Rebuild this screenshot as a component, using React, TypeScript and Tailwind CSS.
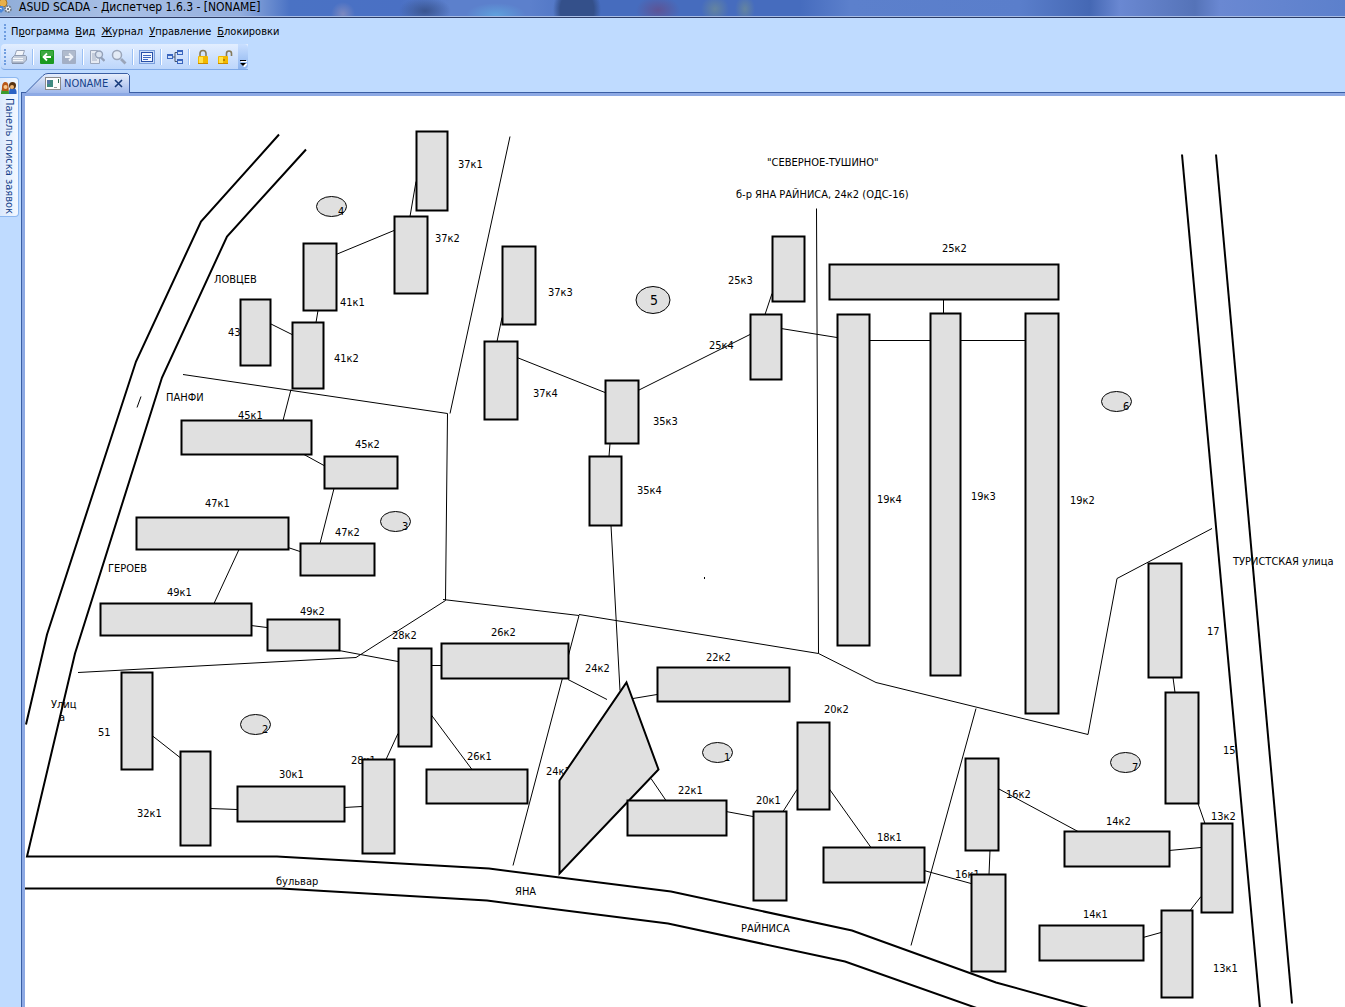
import React from 'react'

type Rect = [number, number, number, number]
type Line = [number, number, number, number]
type Label = [string, number, number]

// left, top, right, bottom
const buildings: Rect[] = [
  [416, 131, 447, 210],
  [394, 216, 427, 293],
  [303, 243, 336, 310],
  [240, 299, 270, 365],
  [292, 322, 323, 388],
  [181, 420, 311, 454],
  [324, 456, 397, 488],
  [136, 517, 288, 549],
  [300, 543, 374, 575],
  [100, 603, 251, 635],
  [267, 619, 339, 650],
  [121, 672, 152, 769],
  [180, 751, 210, 845],
  [237, 786, 344, 821],
  [362, 759, 394, 853],
  [398, 648, 431, 746],
  [441, 643, 568, 678],
  [426, 769, 527, 803],
  [657, 667, 789, 701],
  [627, 800, 726, 835],
  [753, 811, 786, 900],
  [797, 722, 829, 809],
  [823, 847, 924, 882],
  [502, 246, 535, 324],
  [484, 341, 517, 419],
  [605, 380, 638, 443],
  [589, 456, 621, 525],
  [772, 236, 804, 301],
  [750, 314, 781, 379],
  [829, 264, 1058, 299],
  [837, 314, 869, 645],
  [930, 313, 960, 675],
  [1025, 313, 1058, 713],
  [1148, 563, 1181, 677],
  [1165, 692, 1198, 803],
  [1201, 823, 1232, 912],
  [1161, 910, 1192, 997],
  [1064, 831, 1169, 866],
  [1039, 925, 1143, 960],
  [965, 758, 998, 850],
  [971, 874, 1005, 971],
]

const links: Line[] = [
  [416, 181, 410, 216],
  [394, 230, 336, 254],
  [318, 310, 316, 322],
  [270, 323, 292, 334],
  [291, 389, 283, 420],
  [304, 454, 324, 465],
  [334, 488, 320, 543],
  [288, 547, 300, 551],
  [239, 549, 214, 603],
  [251, 625, 267, 627],
  [339, 650, 398, 661],
  [431, 665, 441, 665],
  [152, 735, 180, 757],
  [210, 808, 237, 809],
  [344, 807, 362, 806],
  [386, 759, 398, 733],
  [431, 714, 472, 769],
  [568, 679, 607, 699],
  [633, 698, 657, 694],
  [611, 525, 620, 690],
  [502, 317, 497, 341],
  [517, 357, 605, 392],
  [638, 390, 750, 334],
  [610, 443, 609, 456],
  [772, 293, 765, 314],
  [781, 328, 837, 337],
  [869, 340, 1025, 340],
  [943.5, 299, 943.5, 313],
  [651, 778, 666, 800],
  [726, 811, 753, 816],
  [783, 811, 797, 789],
  [829, 788, 871, 847],
  [924, 870, 971, 883],
  [990, 850, 989, 874],
  [998, 788, 1078, 831],
  [1169, 850, 1201, 847],
  [1173, 677, 1175, 692],
  [1198, 803, 1205, 823],
  [1201, 896, 1190, 910],
  [1143, 937, 1161, 932],
]

const borders = [
  '510,136 450,413',
  '183,374 447.5,413 445.5,600 356,657 78,672',
  '443,599 579,615',
  '579,614 818.5,653 876,682 1088,734 1117,578 1212,528',
  '816.5,208 818.500,653',
  '579,615 513,865',
  '976,708 911,945',
  '141,396 137,407',
]

const roads = [
  '279,134 201,221 136,361 47,634 26,724',
  '306,149 227,236 162,377 75,653 27,856 277,856 489,868 671,891 852,930 996,982 1090,1008',
  '25,888 281,888 487,900 668,923 845,961 978,1008',
  '1182,154 1260,1008',
  '1216,154 1292,1003',
]

const houseLabels: Label[] = [
  ['37к1', 457, 168],
  ['37к2', 434, 242],
  ['41к1', 339, 306],
  ['43', 227, 336],
  ['41к2', 333, 362],
  ['45к1', 237, 419],
  ['45к2', 354, 448],
  ['47к1', 204, 507],
  ['47к2', 334, 536],
  ['49к1', 166, 596],
  ['49к2', 299, 615],
  ['28к2', 391, 639],
  ['26к2', 490, 636],
  ['26к1', 466, 760],
  ['24к2', 584, 672],
  ['24к1', 545, 775],
  ['22к2', 705, 661],
  ['22к1', 677, 794],
  ['20к1', 755, 804],
  ['20к2', 823, 713],
  ['18к1', 876, 841],
  ['51', 97, 736],
  ['32к1', 136, 817],
  ['30к1', 278, 778],
  ['28к1', 350, 764],
  ['37к3', 547, 296],
  ['37к4', 532, 397],
  ['35к3', 652, 425],
  ['35к4', 636, 494],
  ['25к3', 727, 284],
  ['25к4', 708, 349],
  ['25к2', 941, 252],
  ['19к4', 876, 503],
  ['19к3', 970, 500],
  ['19к2', 1069, 504],
  ['17', 1206, 635],
  ['15', 1222, 754],
  ['13к2', 1210, 820],
  ['13к1', 1212, 972],
  ['14к2', 1105, 825],
  ['14к1', 1082, 918],
  ['16к2', 1005, 798],
  ['16к1', 954, 878],
]

const streetLabels: Label[] = [
  ['ЛОВЦЕВ', 213, 283],
  ['ПАНФИ', 165, 401],
  ['ГЕРОЕВ', 107, 572],
  ['Улиц', 50, 708],
  ['а', 58, 721],
  ['бульвар', 275, 885],
  ['ЯНА', 514, 895],
  ['РАЙНИСА', 740, 932],
  ['ТУРИСТСКАЯ  улица', 1232, 565],
  ['"СЕВЕРНОЕ-ТУШИНО"', 766, 166],
  ['б-р ЯНА РАЙНИСА, 24к2 (ОДС-16)', 735, 198],
]

const sectors: Label[] = [
  ['4', 331, 206],
  ['3', 395, 521],
  ['2', 255, 724],
  ['1', 717, 752],
  ['6', 1116, 401],
  ['7', 1125, 762],
]

const menu = [
  ['П', 'р', 'ограмма'],
  ['', 'В', 'ид'],
  ['', 'Ж', 'урнал'],
  ['', 'У', 'правление'],
  ['', 'Б', 'локировки'],
]

const DistrictMap: React.FC = () => (
  <svg className="block h-full w-full" role="img" aria-label="Северное-Тушино">
    <g transform="translate(-24 -96)" className="text-[11px] whitespace-pre">
      {[...houseLabels, ...streetLabels].map(([text, x, y]) => (
        <text key={text} x={x} y={y}>
          {text}
        </text>
      ))}
    </g>
    <g transform="translate(-25 -95.5)" fill="none" stroke="#000">
      {links.map(([x1, y1, x2, y2]) => (
        <line key={`${x1}-${y1}`} x1={x1} y1={y1} x2={x2} y2={y2} />
      ))}
      {borders.map((points) => (
        <polyline key={points} points={points} />
      ))}
      <rect x="704" y="576.5" width="1" height="2" fill="#000" stroke="none" />
      {roads.map((points) => (
        <polyline key={points} points={points} strokeWidth="2" />
      ))}
    </g>
    <g transform="translate(-24.5 -95.5)" fill="#e0e0e0" stroke="#000">
      <polygon points="626,682 658,769 559,873 559,780" strokeWidth="2" />
      {buildings.map(([l, t, r, b]) => (
        <rect key={`${l}-${t}`} x={l} y={t} width={r - l} height={b - t} strokeWidth="2" />
      ))}
      {sectors.map(([n, x, y]) => (
        <ellipse key={n} cx={x} cy={y} rx="15" ry="10" />
      ))}
      <ellipse cx="652.5" cy="299.5" rx="17" ry="13.500" />
    </g>
    <g transform="translate(-24 -96)" className="text-[11px]">
      {sectors.map(([n, x, y]) => (
        <text key={n} x={x + 6} y={y + 9}>
          {n}
        </text>
      ))}
      <text x="653" y="305" textAnchor="middle" className="text-sm">
        5
      </text>
    </g>
  </svg>
)

const AppIcon = () => (
  <svg width="16" height="16" viewBox="0 0 16 16" className="-ml-1 shrink-0">
    <circle cx="7" cy="3" r="4" fill="#e8b04a" stroke="#a87420" />
    <path d="M2 6l5 0 1 4-3 3-3-3z" fill="#4a86d8" />
    <path d="M3 8l3 1" stroke="#dce8fa" />
    <circle cx="12" cy="9" r="3" fill="#eceff3" stroke="#6c7784" strokeWidth="1.6" strokeDasharray="2 1" />
    <circle cx="12" cy="9" r="1" fill="#4c5866" />
  </svg>
)

const PrinterIcon = () => (
  <svg width="16" height="16" viewBox="0 0 16 16">
    <path d="M5.500 1.500h8l-2 6h-8z" fill="#f3f5f9" stroke="#98a3b8" />
    <path d="M1 9l2.500-2.500h11l1 1v3.500l-3 3H1z" fill="#c3ccda" stroke="#8f9bb1" />
    <path d="M2 9.500h10M2 11.500h10" stroke="#f5f7fa" />
    <path d="M1 14.500h11.500" stroke="#8390a8" />
  </svg>
)

const ArrowIcon = ({ active }: { active?: boolean }) => (
  <svg width="16" height="16" viewBox="0 0 16 16">
    <rect x="1" y="1" width="14" height="14" rx="1" fill={active ? '#1c9a22' : '#a3afc5'} />
    <path d="M2 2h12v5H2z" fill="#fff" opacity="0.15" />
    {active ? (
      <path d="M12 8H4.500M8 4.500L4.500 8 8 11.500" fill="none" stroke="#fff" strokeWidth="1.800" />
    ) : (
      <path d="M4 8h7.500M8 4.500l3.500 3.500L8 11.500" fill="none" stroke="#eef2f8" strokeWidth="1.800" />
    )}
  </svg>
)

const PreviewIcon = () => (
  <svg width="16" height="16" viewBox="0 0 16 16">
    <path d="M1.500 1.500h7l2 2v11h-9z" fill="#e6ebf3" stroke="#9ba7bd" />
    <path d="M3 5h3M3 7h3M3 9h4M3 11h5" stroke="#a5b0c4" />
    <circle cx="10" cy="5.500" r="3.500" fill="#dbe4f1" stroke="#94a1b8" strokeWidth="1.400" />
    <path d="M12 8.500l3.500 3.500" stroke="#94a1b8" strokeWidth="2.400" />
  </svg>
)

const MagnifierIcon = () => (
  <svg width="16" height="16" viewBox="0 0 16 16">
    <circle cx="6" cy="6" r="4.500" fill="#e3ebf6" stroke="#9aa5b9" strokeWidth="1.500" />
    <path d="M10 10l4.500 4.500" stroke="#9aa5b9" strokeWidth="2.800" />
  </svg>
)

const ListIcon = () => (
  <svg width="16" height="16" viewBox="0 0 16 16">
    <rect x="0.500" y="1.500" width="15" height="13" fill="#c9dcf9" stroke="#7b9fdd" />
    <rect x="2.500" y="3.500" width="11" height="9" fill="#f4f8ff" stroke="#2950a8" />
    <path d="M4 6.500h8M4 8.500h8M4 10.500h5" stroke="#3d68c0" />
  </svg>
)

const NetworkIcon = () => (
  <svg width="16" height="16" viewBox="0 0 16 16">
    <path d="M5 8h3M8 3.500v9M8 3.500h3M8 12.500h3" fill="none" stroke="#46546c" />
    <rect x="0.500" y="5.500" width="5" height="4" fill="#cfe0fb" stroke="#3a66be" />
    <rect x="10.500" y="1.500" width="5" height="4" fill="#cfe0fb" stroke="#3a66be" />
    <rect x="10.500" y="10.500" width="5" height="4" fill="#cfe0fb" stroke="#3a66be" />
    <path d="M0 6h6M10 2h6M10 11h6" stroke="#3a66be" strokeWidth="2" />
  </svg>
)

const LockIcon = () => (
  <svg width="16" height="16" viewBox="0 0 16 16">
    <path d="M5 8V4.500a3 3 0 016 0V8" fill="none" stroke="#857a5a" strokeWidth="1.600" />
    <rect x="3" y="7" width="10" height="8" rx="1" fill="#f2b800" />
    <path d="M4 8h4v6H4z" fill="#ffe34d" />
    <path d="M3 14.500h10" stroke="#c98a00" />
  </svg>
)

const UnlockIcon = () => (
  <svg width="16" height="16" viewBox="0 0 16 16">
    <path d="M9.500 8V4.500a2.500 2.500 0 015 0V7" fill="none" stroke="#857a5a" strokeWidth="1.600" />
    <rect x="1" y="7" width="10" height="8" rx="1" fill="#f2b800" />
    <path d="M2 8h4v6H2z" fill="#ffe34d" />
    <path d="M1 14.500h10" stroke="#c98a00" />
    <circle cx="7" cy="11" r="1" fill="#a87400" />
  </svg>
)

const PeopleIcon = () => (
  <svg width="16" height="16" viewBox="0 0 16 16" className="shrink-0">
    <path d="M8 14c0-5 1-6 3.500-6S16 9 15.500 14z" fill="#2b62c4" />
    <circle cx="11.500" cy="5.500" r="3.500" fill="#5b3410" />
    <circle cx="11" cy="7" r="2" fill="#f0b878" />
    <path d="M0 14c0-4 1-6 4-6s4 2 4 6z" fill="#3c9a2e" />
    <path d="M1 11c-.5-7 1-9 3.500-9S8 5 7.500 11z" fill="#b8581a" />
    <circle cx="4.500" cy="7" r="2" fill="#f6c890" />
  </svg>
)

const TabIcon = () => (
  <svg width="16" height="14" viewBox="0 0 16 14">
    <rect x="0.500" y="0.500" width="15" height="12" fill="#fdfdfd" stroke="#8b8b8b" />
    <rect x="2" y="3" width="6" height="7" fill="#3f8a80" />
    <rect x="2" y="3" width="3" height="4" fill="#5578a8" />
    <path d="M13.500 2v4" stroke="#2f6f55" />
    <path d="M9 10.500h3" stroke="#999" />
  </svg>
)

const Grip = () => <span className="ml-[3px] h-4 border-l-2 border-dotted border-[#6f9de0]" />

const Separator = () => (
  <span className="flex h-4 w-1.5 shrink-0 justify-center">
    <span className="w-px bg-[#9ac0f5]" />
    <span className="w-px bg-white" />
  </span>
)

interface ToolProps {
  label: string
  disabled?: boolean
  children: React.ReactNode
}

const Tool: React.FC<ToolProps> = ({ label, disabled, children }) => (
  <button
    type="button"
    aria-label={label}
    disabled={disabled}
    className="flex h-[22px] w-[22px] shrink-0 items-center justify-center"
  >
    {children}
  </button>
)

const TitleBar: React.FC = () => (
  <header className="border-b border-[#2b3c66]">
    <div className="flex h-[17px] items-start overflow-hidden border-b border-[#a9bde4] bg-[radial-gradient(12px_12px_at_343px_14px,#7c89c0,transparent),radial-gradient(26px_14px_at_425px_11px,#3a5590,transparent),radial-gradient(30px_12px_at_496px_15px,#5fa0dc,transparent),radial-gradient(24px_30px_at_577px_10px,#34508a_70%,transparent),radial-gradient(22px_14px_at_658px_10px,#5d5496,transparent),radial-gradient(14px_14px_at_715px_9px,#6484a0,transparent),radial-gradient(10px_14px_at_745px_9px,#6484a0,transparent),linear-gradient(90deg,#90add8_0px,#a9c0e6_120px,#93aede_240px,#4a72c4_290px,#4a70c4_400px,#5c80cc_450px,#5c80cc_530px,#466cbe_600px,#466cbe_800px,#5c80cc_850px,#5a7ecb_1020px,#4568b4_1090px,#6a88d2_1120px,#5573b8_1195px,#6a88d2_1220px,#5c80cc_1345px)]">
      <AppIcon />
      <h1 className="ml-[7px] text-[12px] leading-[14px] whitespace-nowrap text-black">
        ASUD SCADA - Диспетчер 1.6.3 - [NONAME]
      </h1>
    </div>
  </header>
)

const App: React.FC = () => {
  return (
    <div className="flex h-screen flex-col overflow-hidden bg-[#bfdbff] font-['DejaVu_Sans_Condensed','Noto_Sans',sans-serif] text-[11px] text-black">
      <TitleBar />

      <nav className="flex h-[26px] items-center pt-0.5 pl-px">
        <Grip />
        <ul className="flex gap-1.5 pl-[5px]">
          {menu.map(([before, key, after]) => (
            <li key={after}>
              <button type="button" className="leading-4">
                {before}
                <span className="underline">{key}</span>
                {after}
              </button>
            </li>
          ))}
        </ul>
      </nav>

      <div className="flex">
        <div className="ml-px flex h-[26px] items-center rounded-l-sm border-b border-[#7fa9e6] bg-linear-to-b from-[#e2eeff] to-[#bdd6fb]">
          <span className="flex w-[7px]">
            <Grip />
          </span>
          <Tool label="Печать" disabled>
            <PrinterIcon />
          </Tool>
          <Separator />
          <Tool label="Назад">
            <ArrowIcon active />
          </Tool>
          <Tool label="Вперёд" disabled>
            <ArrowIcon />
          </Tool>
          <Separator />
          <Tool label="Предварительный просмотр" disabled>
            <PreviewIcon />
          </Tool>
          <Tool label="Поиск" disabled>
            <MagnifierIcon />
          </Tool>
          <Separator />
          <Tool label="Список">
            <ListIcon />
          </Tool>
          <Separator />
          <Tool label="Схема">
            <NetworkIcon />
          </Tool>
          <Separator />
          <Tool label="Заблокировать">
            <LockIcon />
          </Tool>
          <Tool label="Разблокировать">
            <UnlockIcon />
          </Tool>
          <button
            type="button"
            aria-label="Параметры панели"
            className="ml-0.5 flex h-full w-2.5 items-end justify-center rounded-r-sm bg-linear-to-b from-[#c9dfff] to-[#8db4ee] pb-0.5"
          >
            <svg width="8" height="8" viewBox="0 0 8 8">
              <path d="M2 2.500h6M3 5h5L5.500 8z" fill="#fff" stroke="#fff" />
              <path d="M1 1.500h6" stroke="#000" />
              <path d="M1 4h6L4 7z" fill="#000" />
            </svg>
          </button>
        </div>
      </div>

      <main className="flex min-h-0 flex-1">
        <aside className="w-[21px] shrink-0 pt-[7px]">
          <button
            type="button"
            className="flex h-[140px] w-[19px] flex-col items-center gap-0.5 rounded-r-sm border border-l-0 border-[#8db8f0] bg-linear-to-r from-[#dbe9fd] to-[#f3f8ff] pt-0.5 text-[#15428b]"
          >
            <PeopleIcon />
            <span className="leading-4 whitespace-nowrap [writing-mode:vertical-rl]">Панель поиска заявок</span>
          </button>
        </aside>

        <section className="flex min-w-0 flex-1 flex-col">
          <div className="flex h-[23px] items-end">
            <div className="flex h-5 flex-1 items-end border-b border-[#3b5fa4]">
              <div className="relative -mb-px flex h-5 w-[109px] items-center pt-px pl-6">
                <svg className="absolute inset-0" width="109" height="20" viewBox="0 0 109 20">
                  <defs>
                    <linearGradient id="tab" x1="0" y1="0" x2="0" y2="1">
                      <stop offset="0" stopColor="#e8effc" />
                      <stop offset="1" stopColor="#9db6ea" />
                    </linearGradient>
                  </defs>
                  <path
                    d="M0 20.500L5 19.500L22 2.500Q24 0.500 27 0.500H106.500L108.500 2.500V20.500"
                    fill="url(#tab)"
                    stroke="#3b5fa4"
                  />
                </svg>
                <span className="relative flex items-center gap-[3px] text-[#15428b]">
                  <TabIcon />
                  <a href="#noname" className="leading-4">
                    NONAME
                  </a>
                  <button type="button" aria-label="Закрыть" className="ml-[3px]">
                    <svg width="9" height="9" viewBox="0 0 9 9">
                      <path d="M1 1l7 7M8 1L1 8" stroke="#173a7a" strokeWidth="1.600" />
                    </svg>
                  </button>
                </span>
              </div>
            </div>
          </div>
          <div className="min-h-0 flex-1 border-l border-[#3b5fa4]">
            <div className="h-full border-t-[3px] border-l-[3px] border-[#8da9e4] bg-white">
              <DistrictMap />
            </div>
          </div>
        </section>
      </main>
    </div>
  )
}

export default App
